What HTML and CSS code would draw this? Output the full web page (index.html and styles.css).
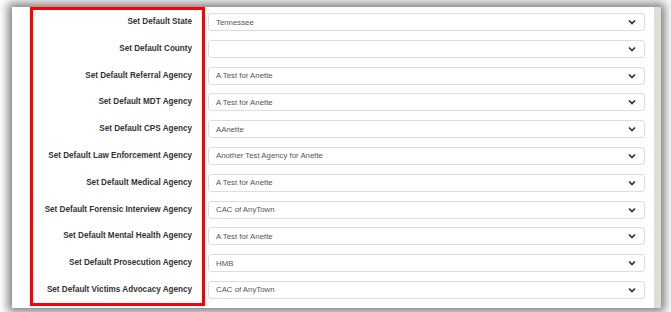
FILE: index.html
```html
<!DOCTYPE html>
<html lang="en">
<head>
    <meta charset="UTF-8">
    <meta name="viewport" content="width=device-width, initial-scale=1.0">
    <title>Default Agencies</title>
    <link rel="stylesheet" href="styles.css">
</head>
<body>

    <div class="frame">
        <div class="labels">
            <label>Set Default State</label>
            <label>Set Default County</label>
            <label>Set Default Referral Agency</label>
            <label>Set Default MDT Agency</label>
            <label>Set Default CPS Agency</label>
            <label>Set Default Law Enforcement Agency</label>
            <label>Set Default Medical Agency</label>
            <label>Set Default Forensic Interview Agency</label>
            <label>Set Default Mental Health Agency</label>
            <label>Set Default Prosecution Agency</label>
            <label>Set Default Victims Advocacy Agency</label>
        </div>

        <div class="fields">
            <div class="select"><span>Tennessee</span><svg viewBox="0 0 8 6"><path d="M1 1.5 L4 4.5 L7 1.5"/></svg></div>
            <div class="select"><span></span><svg viewBox="0 0 8 6"><path d="M1 1.5 L4 4.5 L7 1.5"/></svg></div>
            <div class="select"><span>A Test for Anette</span><svg viewBox="0 0 8 6"><path d="M1 1.5 L4 4.5 L7 1.5"/></svg></div>
            <div class="select"><span>A Test for Anette</span><svg viewBox="0 0 8 6"><path d="M1 1.5 L4 4.5 L7 1.5"/></svg></div>
            <div class="select"><span>AAnette</span><svg viewBox="0 0 8 6"><path d="M1 1.5 L4 4.5 L7 1.5"/></svg></div>
            <div class="select"><span>Another Test Agency for Anette</span><svg viewBox="0 0 8 6"><path d="M1 1.5 L4 4.5 L7 1.5"/></svg></div>
            <div class="select"><span>A Test for Anette</span><svg viewBox="0 0 8 6"><path d="M1 1.5 L4 4.5 L7 1.5"/></svg></div>
            <div class="select"><span>CAC of AnyTown</span><svg viewBox="0 0 8 6"><path d="M1 1.5 L4 4.5 L7 1.5"/></svg></div>
            <div class="select"><span>A Test for Anette</span><svg viewBox="0 0 8 6"><path d="M1 1.5 L4 4.5 L7 1.5"/></svg></div>
            <div class="select"><span>HMB</span><svg viewBox="0 0 8 6"><path d="M1 1.5 L4 4.5 L7 1.5"/></svg></div>
            <div class="select"><span>CAC of AnyTown</span><svg viewBox="0 0 8 6"><path d="M1 1.5 L4 4.5 L7 1.5"/></svg></div>
        </div>

        <div class="strip"></div>
    </div>

</body>
</html>
```

FILE: styles.css
```css
* {
    margin: 0;
    padding: 0;
    box-sizing: border-box;
}
body {
    font-family: 'Liberation Sans', Arial, sans-serif;
    background-color: #fff;
    padding: 7px 10px 4px 12px;
    height: 312px;
    overflow: hidden;
}
.frame {
    display: flex;
    height: 301px;
    padding-left: 18px;
    background-color: #fff;
    box-shadow: 0 0 9px 4px rgba(0, 0, 0, 0.5);
}
.labels {
    display: flex;
    flex-direction: column;
    gap: 8.8px;
    width: 175px;
    height: 299px;
    padding: 3px 10px 0 0;
    border: 3px solid #f00;
}
.labels label {
    height: 18px;
    line-height: 18px;
    text-align: right;
    font-size: 8.15px;
    font-weight: bold;
    color: #333;
    white-space: nowrap;
}
.fields {
    display: flex;
    flex-direction: column;
    gap: 8.8px;
    width: 437px;
    margin-left: 3px;
    padding-top: 6px;
}
.select {
    display: flex;
    align-items: center;
    justify-content: space-between;
    height: 18px;
    padding: 0 8px 0 7px;
    border: 1px solid #ddd;
    border-radius: 3px;
    background-color: #fff;
    font-size: 7.8px;
    color: #555;
}
.select svg {
    width: 8px;
    height: 6px;
}
.select path {
    fill: none;
    stroke: #333;
    stroke-width: 1.7;
}
.strip {
    width: 7px;
    margin-left: 9px;
    background-color: #e2ded6;
}
```
